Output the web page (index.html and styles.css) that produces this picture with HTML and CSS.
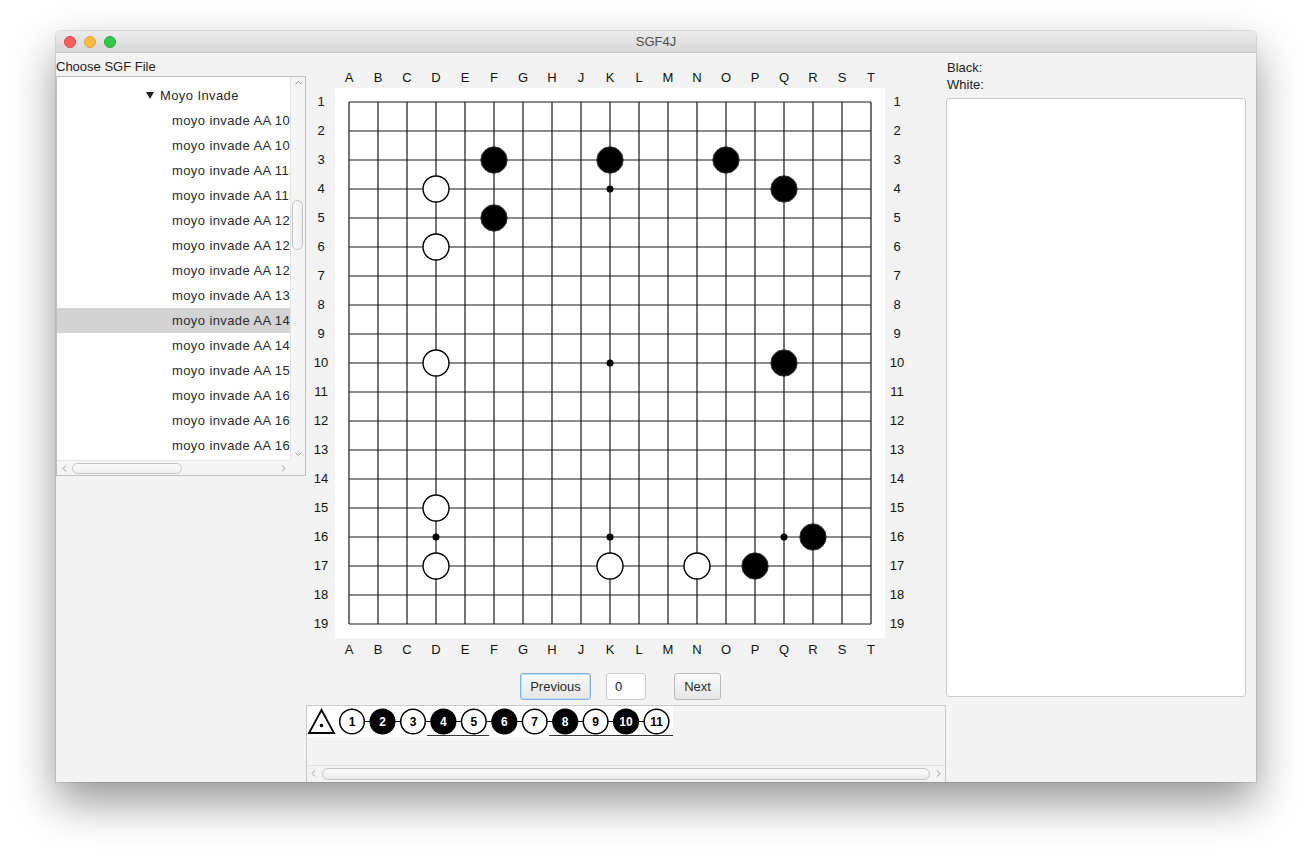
FILE: index.html
```html
<!DOCTYPE html>
<html>
<head>
<meta charset="utf-8">
<title>SGF4J</title>
<link rel="stylesheet" href="styles.css">
</head>
<body>
<div class="window">
  <div class="titlebar">
    <div class="lights">
      <span class="light red"></span>
      <span class="light yellow"></span>
      <span class="light green"></span>
    </div>
    <div class="title">SGF4J</div>
  </div>
  <div class="content">
    <div class="left">
      <div class="label">Choose SGF File</div>
      <div class="tree">
        <div class="tree-list">
          <div class="row folder"><span class="disclosure"></span>Moyo Invade</div>
          <div class="row item">moyo invade AA 10a</div>
          <div class="row item">moyo invade AA 10b</div>
          <div class="row item">moyo invade AA 11a</div>
          <div class="row item">moyo invade AA 11b</div>
          <div class="row item">moyo invade AA 12a</div>
          <div class="row item">moyo invade AA 12b</div>
          <div class="row item">moyo invade AA 12c</div>
          <div class="row item">moyo invade AA 13</div>
          <div class="row item selected">moyo invade AA 14a</div>
          <div class="row item">moyo invade AA 14b</div>
          <div class="row item">moyo invade AA 15</div>
          <div class="row item">moyo invade AA 16a</div>
          <div class="row item">moyo invade AA 16b</div>
          <div class="row item">moyo invade AA 16c</div>
        </div>
        <div class="vscroll">
          <svg class="chev" width="15" height="12" viewBox="0 0 15 12"><path d="M4.5 7.5L7.5 4.5L10.5 7.5" fill="none" stroke="#9a9a9a" stroke-width="1"/></svg>
          <div class="vtrack"><div class="vthumb"></div></div>
          <svg class="chev" width="15" height="12" viewBox="0 0 15 12"><path d="M4.5 4.5L7.5 7.5L10.5 4.5" fill="none" stroke="#9a9a9a" stroke-width="1"/></svg>
        </div>
        <div class="hscroll">
          <svg class="chev" width="12" height="15" viewBox="0 0 12 15"><path d="M8 4.5L5 7.5L8 10.5" fill="none" stroke="#9a9a9a" stroke-width="1"/></svg>
          <div class="htrack"><div class="hthumb"></div></div>
          <svg class="chev" width="12" height="15" viewBox="0 0 12 15"><path d="M4 4.5L7 7.5L4 10.5" fill="none" stroke="#9a9a9a" stroke-width="1"/></svg>
        </div>
        <div class="corner"></div>
      </div>
    </div>

    <div class="center">
      <svg class="board" width="640" height="612" viewBox="0 0 640 612">
        <rect x="29" y="35" width="550" height="550" fill="#ffffff"/>
        <path class="grid" d="M43 49V571M72 49V571M101 49V571M130 49V571M159 49V571M188 49V571M217 49V571M246 49V571M275 49V571M304 49V571M333 49V571M362 49V571M391 49V571M420 49V571M449 49V571M478 49V571M507 49V571M536 49V571M565 49V571M43 49H565M43 78H565M43 107H565M43 136H565M43 165H565M43 194H565M43 223H565M43 252H565M43 281H565M43 310H565M43 339H565M43 368H565M43 397H565M43 426H565M43 455H565M43 484H565M43 513H565M43 542H565M43 571H565"/>
        <g class="coord" text-anchor="middle">
          <text x="43" y="29">A</text><text x="72" y="29">B</text><text x="101" y="29">C</text><text x="130" y="29">D</text><text x="159" y="29">E</text><text x="188" y="29">F</text><text x="217" y="29">G</text><text x="246" y="29">H</text><text x="275" y="29">J</text><text x="304" y="29">K</text><text x="333" y="29">L</text><text x="362" y="29">M</text><text x="391" y="29">N</text><text x="420" y="29">O</text><text x="449" y="29">P</text><text x="478" y="29">Q</text><text x="507" y="29">R</text><text x="536" y="29">S</text><text x="565" y="29">T</text>
          <text x="43" y="601">A</text><text x="72" y="601">B</text><text x="101" y="601">C</text><text x="130" y="601">D</text><text x="159" y="601">E</text><text x="188" y="601">F</text><text x="217" y="601">G</text><text x="246" y="601">H</text><text x="275" y="601">J</text><text x="304" y="601">K</text><text x="333" y="601">L</text><text x="362" y="601">M</text><text x="391" y="601">N</text><text x="420" y="601">O</text><text x="449" y="601">P</text><text x="478" y="601">Q</text><text x="507" y="601">R</text><text x="536" y="601">S</text><text x="565" y="601">T</text>
          <text x="15" y="53">1</text><text x="15" y="82">2</text><text x="15" y="111">3</text><text x="15" y="140">4</text><text x="15" y="169">5</text><text x="15" y="198">6</text><text x="15" y="227">7</text><text x="15" y="256">8</text><text x="15" y="285">9</text><text x="15" y="314">10</text><text x="15" y="343">11</text><text x="15" y="372">12</text><text x="15" y="401">13</text><text x="15" y="430">14</text><text x="15" y="459">15</text><text x="15" y="488">16</text><text x="15" y="517">17</text><text x="15" y="546">18</text><text x="15" y="575">19</text>
          <text x="591" y="53">1</text><text x="591" y="82">2</text><text x="591" y="111">3</text><text x="591" y="140">4</text><text x="591" y="169">5</text><text x="591" y="198">6</text><text x="591" y="227">7</text><text x="591" y="256">8</text><text x="591" y="285">9</text><text x="591" y="314">10</text><text x="591" y="343">11</text><text x="591" y="372">12</text><text x="591" y="401">13</text><text x="591" y="430">14</text><text x="591" y="459">15</text><text x="591" y="488">16</text><text x="591" y="517">17</text><text x="591" y="546">18</text><text x="591" y="575">19</text>
        </g>
        <g class="hoshi">
          <circle cx="304" cy="136" r="3.5"/><circle cx="304" cy="310" r="3.5"/><circle cx="130" cy="484" r="3.5"/><circle cx="304" cy="484" r="3.5"/><circle cx="478" cy="484" r="3.5"/>
        </g>
        <g class="black">
          <circle cx="188" cy="107" r="13.2"/><circle cx="304" cy="107" r="13.2"/><circle cx="420" cy="107" r="13.2"/><circle cx="478" cy="136" r="13.2"/><circle cx="188" cy="165" r="13.2"/><circle cx="478" cy="310" r="13.2"/><circle cx="507" cy="484" r="13.2"/><circle cx="449" cy="513" r="13.2"/>
        </g>
        <g class="white">
          <circle cx="130" cy="136" r="13"/><circle cx="130" cy="194" r="13"/><circle cx="130" cy="310" r="13"/><circle cx="130" cy="455" r="13"/><circle cx="130" cy="513" r="13"/><circle cx="304" cy="513" r="13"/><circle cx="391" cy="513" r="13"/>
        </g>
      </svg>

      <div class="controls">
        <button class="btn focused">Previous</button>
        <div class="field">0</div>
        <button class="btn">Next</button>
      </div>

      <div class="movetree">
        <div class="moves-area">
          <svg class="moves" width="366" height="31" viewBox="0 0 366 31">
            <rect width="366" height="31" fill="#ffffff"/>
            <path d="M14.5 4L2 27H27Z" fill="none" stroke="#000" stroke-width="1.8" stroke-linejoin="miter"/>
            <circle cx="14.5" cy="19.5" r="1.8" fill="#000"/>
            <path d="M45 15.5H350" stroke="#000" stroke-width="1.2"/>
            <path d="M120 29.5H182M242 29.5H366" stroke="#333" stroke-width="1"/>
            <g class="mv-w"><circle cx="45" cy="15.5" r="12.3"/><circle cx="106" cy="15.5" r="12.3"/><circle cx="166.8" cy="15.5" r="12.3"/><circle cx="227.7" cy="15.5" r="12.3"/><circle cx="288.6" cy="15.5" r="12.3"/><circle cx="349.5" cy="15.5" r="12.3"/></g>
            <g class="mv-b"><circle cx="75.5" cy="15.5" r="12.3"/><circle cx="136.4" cy="15.5" r="12.3"/><circle cx="197.3" cy="15.5" r="12.3"/><circle cx="258.2" cy="15.5" r="12.3"/><circle cx="319" cy="15.5" r="12.3"/></g>
            <g class="mv-num" text-anchor="middle">
              <text x="45" y="20">1</text><text class="inv" x="75.5" y="20">2</text><text x="106" y="20">3</text><text class="inv" x="136.4" y="20">4</text><text x="166.8" y="20">5</text><text class="inv" x="197.3" y="20">6</text><text x="227.7" y="20">7</text><text class="inv" x="258.2" y="20">8</text><text x="288.6" y="20">9</text><text class="inv" x="319" y="20">10</text><text x="349.5" y="20">11</text>
            </g>
          </svg>
        </div>
        <div class="mt-hscroll">
          <svg class="chev" width="14" height="15" viewBox="0 0 14 15"><path d="M8 4.5L5 7.5L8 10.5" fill="none" stroke="#9a9a9a" stroke-width="1"/></svg>
          <div class="mt-track"><div class="mt-thumb"></div></div>
          <svg class="chev" width="14" height="15" viewBox="0 0 14 15"><path d="M6 4.5L9 7.5L6 10.5" fill="none" stroke="#9a9a9a" stroke-width="1"/></svg>
        </div>
      </div>
    </div>

    <div class="right">
      <div class="info">Black:</div>
      <div class="info">White:</div>
      <div class="textarea"></div>
    </div>
  </div>
</div>
</body>
</html>
```

FILE: styles.css
```css
* { box-sizing: border-box; }
html, body { margin: 0; background: #ffffff; }
body {
  padding: 31px 0 0 56px;
  font-family: "Liberation Sans", Arial, sans-serif;
  font-size: 13px;
  color: #222;
  height: 862px;
  overflow: hidden;
}
.window {
  width: 1200px;
  height: 751px;
  border-radius: 5px 5px 0 0;
  box-shadow: 0 20px 45px rgba(0,0,0,0.42), 0 0 0 1px rgba(0,0,0,0.1);
  background: #f3f3f3;
  display: flex;
  flex-direction: column;
}
.titlebar {
  height: 22px;
  flex: none;
  display: flex;
  align-items: center;
  position: relative;
  border-radius: 5px 5px 0 0;
  background: linear-gradient(#ececec, #d8d8d8);
  border-bottom: 1px solid #c6c6c6;
}
.lights { display: flex; gap: 8px; padding-left: 8px; }
.light { width: 12px; height: 12px; border-radius: 50%; display: block; }
.red { background: #fc605c; border: 0.5px solid #e0443e; }
.yellow { background: #fdbc40; border: 0.5px solid #dea236; }
.green { background: #34c84a; border: 0.5px solid #27aa35; }
.title {
  position: absolute;
  left: 0; right: 0; top: 0;
  text-align: center;
  line-height: 22px;
  font-size: 13px;
  color: #4d4d4d;
}
.content {
  flex: 1;
  display: grid;
  grid-template-columns: 250px 640px 310px;
  background: #f3f3f3;
}
.label {
  height: 23px;
  padding-top: 6px;
  line-height: 16px;
  color: #1e1e1e;
}
.tree {
  width: 250px;
  height: 400px;
  border: 1px solid #bfbfbf;
  background: #fff;
  display: grid;
  grid-template-columns: 233px 15px;
  grid-template-rows: 383px 15px;
}
.tree-list {
  padding-top: 6px;
  overflow: hidden;
}
.row {
  height: 25px;
  line-height: 25px;
  white-space: nowrap;
  overflow: hidden;
  color: #2b2b2b;
  letter-spacing: 0.4px;
}
.item { padding-left: 115px; }
.folder { padding-left: 89px; display: flex; align-items: center; }
.disclosure {
  width: 0; height: 0;
  border-left: 4px solid transparent;
  border-right: 4px solid transparent;
  border-top: 7px solid #222;
  margin-right: 6px;
}
.selected { background: #d3d3d3; }
.vscroll {
  background: #f5f5f5;
  border-left: 1px solid #e3e3e3;
  display: flex;
  flex-direction: column;
}
.chev { display: block; flex: none; }
.vtrack { flex: 1; position: relative; }
.vthumb {
  position: absolute;
  left: 1px; width: 11px;
  top: 111px; height: 50px;
  border: 1px solid #c3c3c3;
  border-radius: 6px;
  background: linear-gradient(90deg, #fafafa, #efefef);
}
.hscroll {
  background: #f5f5f5;
  border-top: 1px solid #e3e3e3;
  display: flex;
  align-items: center;
  padding-left: 1px;
}
.htrack { flex: 1; position: relative; height: 15px; }
.hthumb {
  position: absolute;
  left: 2px; width: 110px;
  top: 2px; height: 11px;
  border: 1px solid #c3c3c3;
  border-radius: 6px;
  background: linear-gradient(#fafafa, #efefef);
}
.corner { background: #f5f5f5; }

.center { display: flex; flex-direction: column; }
.board { display: block; }
.grid { stroke: #1a1a1a; stroke-width: 1.2; fill: none; }
.coord text { font-family: "Liberation Sans", Arial, sans-serif; font-size: 13px; fill: #111; }
.hoshi circle { fill: #000; }
.black circle { fill: #000; stroke: #3a3a3a; stroke-width: 1; }
.white circle { fill: #fff; stroke: #000; stroke-width: 1.4; }

.controls {
  margin-top: 8px;
  height: 27px;
  display: flex;
  padding-left: 214px;
}
.btn {
  height: 27px;
  font-family: "Liberation Sans", Arial, sans-serif;
  font-size: 13px;
  color: #2a2a2a;
  padding: 0 8px;
  border: 1px solid #b9b9b9;
  border-radius: 3px;
  background: linear-gradient(#fbfbfb, #e6e6e6);
}
.btn.focused {
  width: 71px;
  border: 1px solid #7ab4e6;
  box-shadow: inset 0 0 0 1px #c3dff5;
}
.field {
  margin-left: 15px;
  width: 40px;
  height: 27px;
  background: #fff;
  border: 1px solid #cacaca;
  border-radius: 3px;
  line-height: 25px;
  padding-left: 8px;
  color: #222;
}
.btn + .field + .btn { margin-left: 28px; width: 47px; }

.movetree {
  margin-top: 5px;
  flex: 1;
  border: 1px solid #c9c9c9;
  border-bottom: none;
  display: flex;
  flex-direction: column;
  background: #f3f3f3;
}
.moves-area { flex: 1; }
.moves { display: block; }
.mv-w circle { fill: #fff; stroke: #000; stroke-width: 1.5; }
.mv-b circle { fill: #000; stroke: #000; stroke-width: 1.5; }
.mv-num text { font-family: "Liberation Sans", Arial, sans-serif; font-size: 12px; font-weight: bold; fill: #000; }
.mv-num text.inv { fill: #fff; }
.mt-hscroll {
  height: 17px;
  border-top: 1px solid #e0e0e0;
  background: #f3f3f3;
  display: flex;
  align-items: center;
  padding-bottom: 1px;
}
.mt-track { flex: 1; height: 15px; position: relative; }
.mt-thumb {
  position: absolute;
  left: 1px; right: 1px;
  top: 2px; height: 12px;
  border: 1px solid #c3c3c3;
  border-radius: 6px;
  background: linear-gradient(#fafafa, #ececec);
}

.right { padding-top: 6px; }
.info { line-height: 17px; padding-left: 1px; color: #222; }
.textarea {
  margin-top: 5px;
  width: 300px;
  height: 599px;
  background: #fff;
  border: 1px solid #c9c9c9;
  border-radius: 3px;
}
```
